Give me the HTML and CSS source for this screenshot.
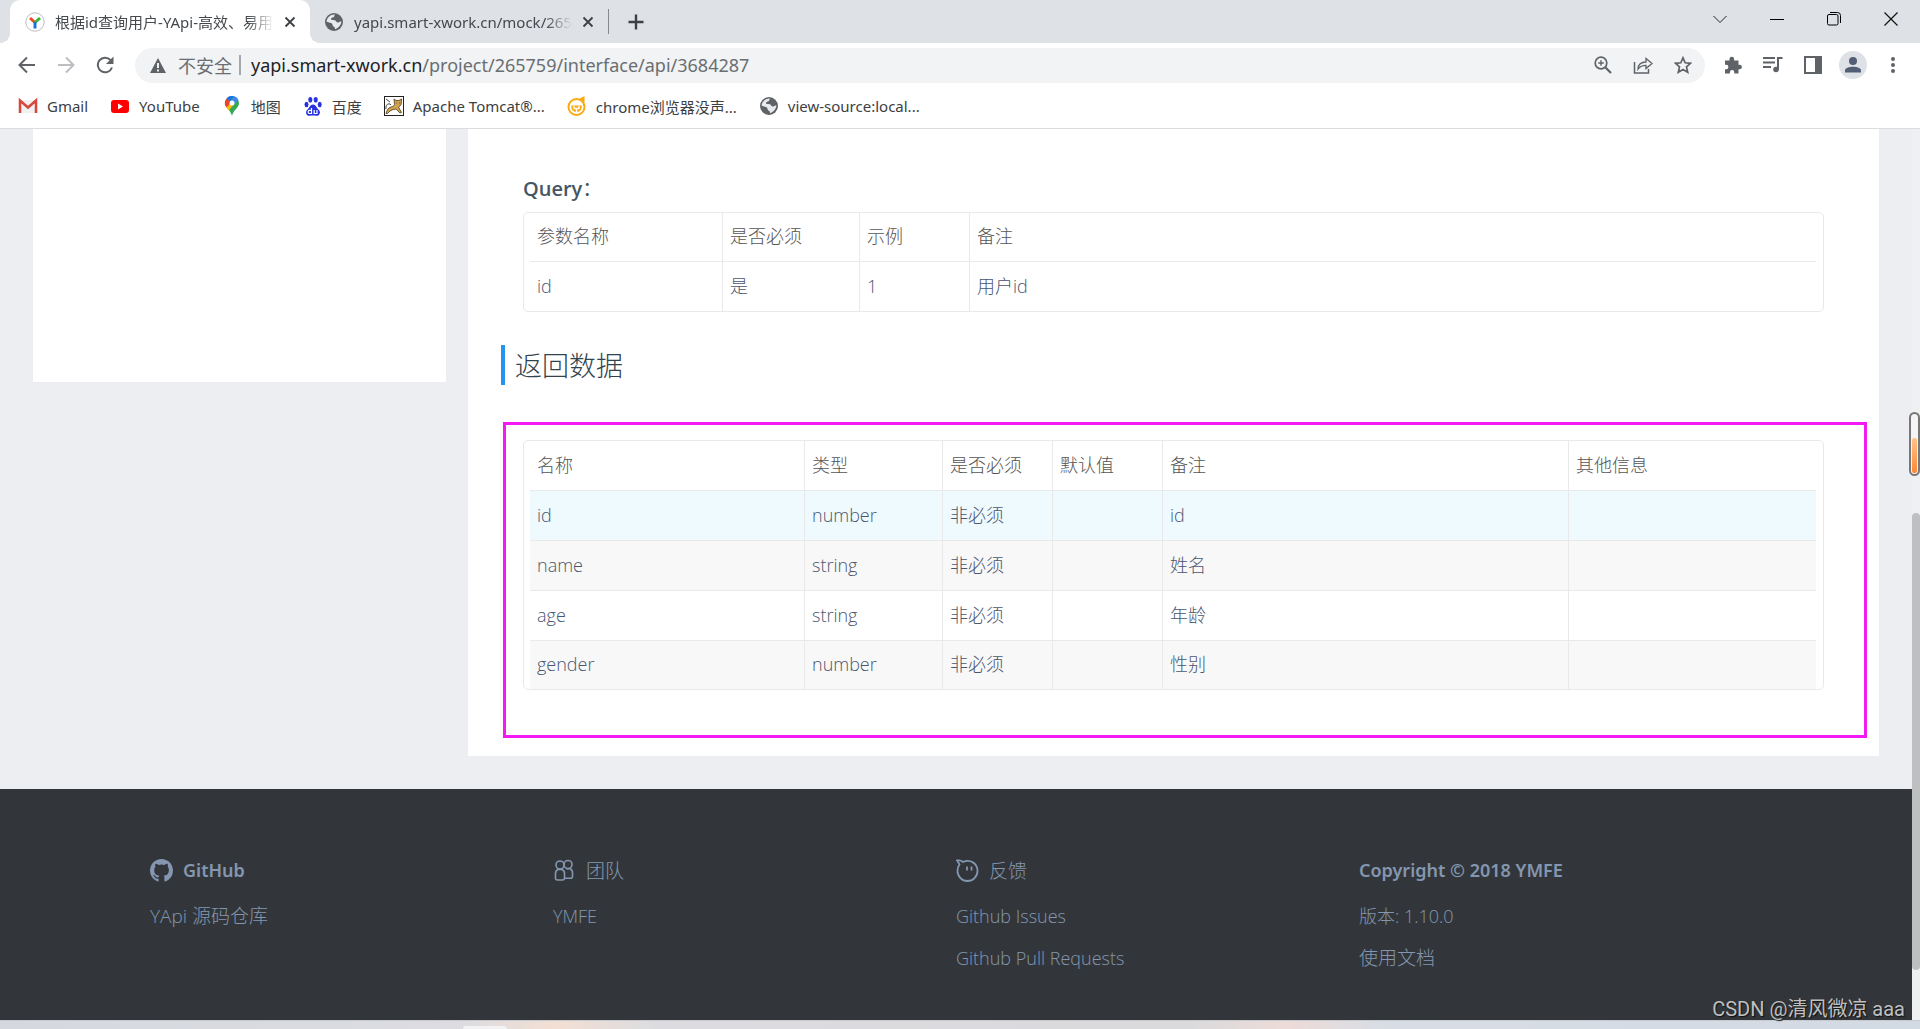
FILE: index.html
```html
<!DOCTYPE html>
<html lang="zh-CN">
<head>
<meta charset="utf-8">
<title>根据id查询用户-YApi</title>
<link rel="stylesheet" href="styles.css">
</head>
<body>
<svg class="defs" aria-hidden="true">
  <symbol id="close" viewBox="0 0 12 12"><path d="M1.5 1.5l9 9M10.5 1.5l-9 9" fill="none" stroke="#3c4043" stroke-width="1.8"/></symbol>
  <symbol id="globe" viewBox="0 0 20 20"><circle cx="10" cy="10" r="9" fill="#5f6368"/><path d="M11 2.5c-1 1-.2 2-1.500 2.700-1.300.6-2.500.5-2.500 1.800 0 1.500 2.500.7 4 1.300 1.500.7 1 2.200 2.800 2.200 1.400 0 1.900-1.500 3.600-.9-.3 3.600-3 6.600-6.400 7.600 0-1.700-.3-2-1.500-2.700-1.200-.6-.5-2.500-2-3.300C6 10.500 4 10.300 2.600 9.800 2.700 5.800 6.500 2.300 11 2.500z" fill="#e8eaed"/></symbol>
</svg>

<header class="browser">
  <div class="tabstrip">
    <div class="tab tab-active">
      <svg class="favicon" viewBox="0 0 20 20"><circle cx="10" cy="10" r="9.200" fill="#fff" stroke="#b8bcc2"/><path d="M10 10.500L5 6" stroke="#ee4b1f" stroke-width="3"/><path d="M10 10.500L15 6" stroke="#33b53a" stroke-width="3"/><path d="M10 10v6.500" stroke="#1b6fe0" stroke-width="3"/></svg>
      <span class="tab-title">根据id查询用户-YApi-高效、易用</span>
      <button class="tab-close" aria-label="关闭"><svg width="12" height="12"><use href="#close"/></svg></button>
    </div>
    <div class="tab tab-back">
      <svg class="favicon"><use href="#globe"/></svg>
      <span class="tab-title">yapi.smart-xwork.cn/mock/2657</span>
      <button class="tab-close" aria-label="关闭"><svg width="12" height="12"><use href="#close"/></svg></button>
    </div>
    <span class="tab-divider"></span>
    <button class="newtab" aria-label="新标签页"><svg width="16" height="16"><path d="M8 .5v15M.5 8h15" stroke="#3c4043" stroke-width="2.400"/></svg></button>
    <div class="window-buttons">
      <button aria-label="搜索标签页"><svg width="14" height="14"><path d="M.5 4L7 10.500 13.500 4" fill="none" stroke="#222"/></svg></button>
      <button aria-label="最小化"><svg width="14" height="14"><path d="M0 7.500h14" stroke="#000"/></svg></button>
      <button aria-label="还原"><svg width="14" height="14"><rect x=".5" y="2.500" width="10.500" height="10.500" rx="1.500" fill="none" stroke="#000"/><path d="M3 .5h7.500q3 0 3 3V11" fill="none" stroke="#000"/></svg></button>
      <button aria-label="关闭窗口"><svg width="14" height="14"><path d="M.5 .5l13 13M13.500 .5l-13 13" stroke="#111" stroke-width="1.200"/></svg></button>
    </div>
  </div>

  <div class="toolbar">
    <div class="nav-buttons">
      <button aria-label="后退"><svg width="18" height="18"><path d="M17 9H2M9 1.500L1.500 9 9 16.500" fill="none" stroke="#5f6368" stroke-width="2"/></svg></button>
      <button aria-label="前进"><svg width="18" height="18"><path d="M1 9h15M9 1.500L16.500 9 9 16.500" fill="none" stroke="#bcbec1" stroke-width="2"/></svg></button>
      <button aria-label="刷新"><svg width="18" height="18"><path d="M16 11.500A7.300 7.300 0 1 1 14.500 4" fill="none" stroke="#5f6368" stroke-width="2"/><path d="M17.500 .5v7.500H10z" fill="#5f6368"/></svg></button>
    </div>
    <div class="omnibox">
      <svg width="16" height="15"><path d="M8 0l8 15H0z" fill="#5f6368"/><path d="M8 5v5M8 11.500v2" stroke="#fff" stroke-width="1.800"/></svg>
      <span class="insecure">不安全</span>
      <span class="omni-divider"></span>
      <span class="url"><b>yapi.smart-xwork.cn</b>/project/265759/interface/api/3684287</span>
      <div class="omni-actions">
        <button aria-label="缩放"><svg width="18" height="18"><circle cx="7" cy="7" r="5.800" fill="none" stroke="#5f6368" stroke-width="1.700"/><path d="M11.500 11.500l5.500 5.500" stroke="#5f6368" stroke-width="2.200"/><path d="M7 4.200v5.600M4.200 7h5.600" stroke="#5f6368" stroke-width="1.400"/></svg></button>
        <button aria-label="分享"><svg width="20" height="18"><path d="M1.500 6v11h14v-4" fill="none" stroke="#5f6368" stroke-width="1.500"/><path d="M5 13c.3-4.500 3-7 8-7V2.500L19 7.500l-6 5V9.300c-3.500 0-6 .9-8 3.700z" fill="none" stroke="#5f6368" stroke-width="1.300"/></svg></button>
        <button aria-label="收藏"><svg width="18" height="18"><path d="M9 1.800l2.200 5 5.300.5-4 3.600 1.200 5.300L9 13.400l-4.700 2.800 1.200-5.300-4-3.600 5.300-.5z" fill="none" stroke="#5f6368" stroke-width="1.700"/></svg></button>
      </div>
    </div>
    <div class="extras">
      <button aria-label="扩展程序"><svg width="18" height="18"><path d="M1 4.500h4.500V3a2.300 2.300 0 0 1 4.600 0v1.500h4.400v4.300h1.200a2.200 2.200 0 0 1 0 4.400h-1.200V17.500H10.300v-1.200a2.200 2.200 0 0 0-4.400 0v1.200H1v-4.300h1.200a2.200 2.200 0 0 0 0-4.400H1z" fill="#5f6368"/></svg></button>
      <button aria-label="媒体控制"><svg width="20" height="18"><path d="M0 2h12M0 6.500h12M0 11h8" stroke="#5f6368" stroke-width="2"/><circle cx="13" cy="13.500" r="2.800" fill="#5f6368"/><path d="M15 13.500V2h4.500" fill="none" stroke="#5f6368" stroke-width="2"/></svg></button>
      <button aria-label="侧边栏"><svg width="18" height="18"><rect x="1" y="1" width="16" height="16" fill="#fff" stroke="#5f6368" stroke-width="2"/><path d="M11 1h6v16h-6z" fill="#5f6368"/></svg></button>
      <button aria-label="个人资料"><svg width="28" height="28"><circle cx="14" cy="14" r="14" fill="#dee1e6"/><circle cx="14" cy="10" r="4" fill="#525e75"/><path d="M6 21.500v-2c0-5 16-5 16 0v2z" fill="#525e75"/></svg></button>
      <button aria-label="菜单"><svg width="6" height="18"><g fill="#5f6368"><circle cx="3" cy="3" r="2"/><circle cx="3" cy="9" r="2"/><circle cx="3" cy="15" r="2"/></g></svg></button>
    </div>
  </div>

  <nav class="bookmarks">
    <a href="#"><svg viewBox="0 0 20 20"><path d="M1 4h18v13H1z" fill="#f1f1f1"/><path d="M2 17V4.500l8 7 8-7V17" fill="none" stroke="#d9453a" stroke-width="2.500"/></svg>Gmail</a>
    <a href="#"><svg viewBox="0 0 20 20"><rect x="1" y="4" width="18" height="13" rx="3" fill="#f00"/><path d="M8 7.500l5 3-5 3z" fill="#fff"/></svg>YouTube</a>
    <a href="#"><svg viewBox="0 0 20 20"><path d="M10 0a7 7 0 0 0-7 7c0 5 5.500 6.500 7 13 1.500-6.500 7-8 7-13a7 7 0 0 0-7-7z" fill="#34a853"/><path d="M4.500 11.500A7 7 0 0 1 4.500 2.700L10 7z" fill="#ea4335"/><path d="M4.500 2.700A7 7 0 0 1 12 .3L8 5z" fill="#1a73e8"/><path d="M12 .3a7 7 0 0 1 4.300 3.600L10 11 7.500 8z" fill="#4285f4"/><path d="M4.500 11.500L9 6.500l2.500 2.500-4.800 5.500z" fill="#fbbc04"/><circle cx="10" cy="7" r="2.500" fill="#fff"/></svg>地图</a>
    <a href="#"><svg viewBox="0 0 20 20"><g fill="#2932e1"><ellipse cx="3.500" cy="8.500" rx="2" ry="2.700"/><ellipse cx="7.300" cy="3.800" rx="2" ry="2.800"/><ellipse cx="12.700" cy="3.800" rx="2" ry="2.800"/><ellipse cx="16.700" cy="8.500" rx="2" ry="2.700"/><path d="M10 8.500c3 0 3.500 3.500 6 5.500 2.500 3-.3 6.300-3 5.800-2-.5-4-.5-6 0-2.700.5-5.500-2.800-3-5.800 2.500-2 3-5.500 6-5.500z"/></g><path d="M8.500 12v5.500H6.700a1.500 1.500 0 0 1 0-3.200h1.800M11.200 14v3.500H14V14" fill="none" stroke="#fff" stroke-width="1.200"/></svg>百度</a>
    <a href="#"><svg viewBox="0 0 20 20"><rect x=".5" y=".5" width="19" height="19" fill="#fff" stroke="#222"/><path d="M2 17.500c1-3 1.500-5.500 5-6.500 2-.5 3-1 3.500-2.500L10 3l2 1.500h3L17.500 3l-.3 5c-.7 2-1.500 2-2.700 3l3 5.500-1.500.5-4-4-3 .5-3 1.500-2.500 2.500z" fill="#d2a24c" stroke="#4a3c20" stroke-width=".8"/><path d="M2 13c-1-4 3-7 5-4M2 3l4 3M12 7h.8M15 7h.8" fill="none" stroke="#444"/></svg>Apache Tomcat®...</a>
    <a href="#"><svg viewBox="0 0 20 20"><circle cx="9.500" cy="11" r="8" fill="#fff" stroke="#fca910" stroke-width="2"/><path d="M11 3.500l6.500-3.500v7z" fill="#fca910"/><path d="M4.500 9.500h10c1 3-1 6.500-5 6.500s-6-3.500-5-6.500z" fill="#fca910"/><path d="M7 10v2.500h5V10M9.500 13v3" fill="none" stroke="#fff" stroke-width="1.300"/></svg>chrome浏览器没声...</a>
    <a href="#"><svg><use href="#globe"/></svg>view-source:local...</a>
  </nav>
</header>

<div class="viewport">
  <div class="page">
    <div class="workspace">
      <aside class="sidebar"></aside>
      <main class="content">
        <h3 class="query-title">Query<span>：</span></h3>
        <div class="table-frame">
          <table class="query-table">
            <colgroup><col class="w-name"><col class="w-need"><col class="w-demo"><col></colgroup>
            <thead><tr><th>参数名称</th><th>是否必须</th><th>示例</th><th>备注</th></tr></thead>
            <tbody><tr><td>id</td><td>是</td><td>1</td><td>用户id</td></tr></tbody>
          </table>
        </div>
        <h2 class="section-title">返回数据</h2>
        <div class="highlight">
          <div class="table-frame">
            <table class="result-table">
              <colgroup><col class="w-field"><col class="w-type"><col class="w-must"><col class="w-default"><col class="w-note"><col></colgroup>
              <thead><tr><th>名称</th><th>类型</th><th>是否必须</th><th>默认值</th><th>备注</th><th>其他信息</th></tr></thead>
              <tbody>
                <tr class="hovered"><td>id</td><td>number</td><td>非必须</td><td></td><td>id</td><td></td></tr>
                <tr class="striped"><td>name</td><td>string</td><td>非必须</td><td></td><td>姓名</td><td></td></tr>
                <tr><td>age</td><td>string</td><td>非必须</td><td></td><td>年龄</td><td></td></tr>
                <tr class="striped"><td>gender</td><td>number</td><td>非必须</td><td></td><td>性别</td><td></td></tr>
              </tbody>
            </table>
          </div>
        </div>
      </main>
    </div>
    <footer class="footer">
      <section>
        <h4><svg width="23" height="23" viewBox="0 0 16 16"><path fill="#8496b0" d="M8 0C3.580 0 0 3.580 0 8c0 3.540 2.290 6.530 5.470 7.590.4.070.55-.17.55-.38v-1.490c-2.010.37-2.530-.49-2.690-.94-.09-.23-.48-.94-.82-1.130-.28-.15-.68-.52-.01-.53.63-.01 1.080.58 1.230.82.72 1.210 1.870.87 2.330.66.07-.52.28-.87.51-1.070-1.780-.2-3.640-.89-3.640-3.950 0-.87.31-1.590.82-2.150-.08-.2-.36-1.020.08-2.120 0 0 .67-.21 2.200.82a7.600 7.600 0 0 1 4 0c1.530-1.040 2.200-.82 2.200-.82.44 1.100.16 1.920.08 2.120.51.56.82 1.270.82 2.150 0 3.070-1.870 3.750-3.650 3.950.29.25.54.73.54 1.480v2.200c0 .21.15.46.55.38A8 8 0 0 0 16 8c0-4.420-3.580-8-8-8z"/></svg>GitHub</h4>
        <a href="#" class="cn">YApi 源码仓库</a>
      </section>
      <section>
        <h4 class="cn"><svg width="23" height="23"><g fill="none" stroke="#8496b0" stroke-width="1.600"><circle cx="7" cy="6" r="4"/><circle cx="15" cy="5.500" r="4"/><path d="M5 10.500h4q2.500 1 2.500 4V19q0 2-2 2h-5q-2 0-2-2v-4.500q0-3 2.500-4zM13 9.800h4q2.500 1 2.500 4v3.500q0 2-2 2h-5.500"/></g></svg>团队</h4>
        <a href="#">YMFE</a>
      </section>
      <section>
        <h4 class="cn"><svg width="23" height="23"><path d="M1 1.500c3-.5 4.500 0 6 1.500 7-3 14.500 1 14.500 9A10 10 0 0 1 1.500 12c0-3 .8-5 2-6.500C2.700 4 2 2.800 1 1.500z" fill="none" stroke="#8496b0" stroke-width="1.800"/><path d="M11 7.500v4M15.500 7.500v4" stroke="#8496b0" stroke-width="1.800"/></svg>反馈</h4>
        <a href="#">Github Issues</a>
        <a href="#">Github Pull Requests</a>
      </section>
      <section>
        <h4>Copyright © 2018 YMFE</h4>
        <a href="#">版本: 1.10.0</a>
        <a href="#" class="cn">使用文档</a>
      </section>
    </footer>
    <p class="watermark">CSDN @清风微凉 aaa</p>
  </div>
  <div class="scrollbar"><div class="thumb"></div></div>
  <div class="gauge"><div class="gauge-fill"></div></div>
</div>
<div class="taskbar"><span></span></div>
</body>
</html>
```
FILE: styles.css
```css
* { box-sizing: border-box; }

body {
  margin: 0;
  min-height: 100vh;
  display: flex;
  flex-direction: column;
  font-family: "Open Sans", "Noto Sans CJK SC", sans-serif;
  font-size: 18px;
  font-weight: 300;
  color: #4a566f;
  background: #eceef1;
}

h2, h3, h4, p { margin: 0; }
a { color: inherit; text-decoration: none; }
button { display: flex; padding: 0; border: 0; background: none; }
svg { display: block; flex: none; }
.defs { position: absolute; width: 0; height: 0; }

.browser {
  border-bottom: 1px solid #dadce0;
  background: #fff;
  font-family: "Noto Sans", "Noto Sans CJK SC", sans-serif;
  font-weight: 400;
}

.tabstrip {
  display: flex;
  align-items: center;
  height: 43px;
  padding-left: 10px;
  background: #dee1e6;
}
.tab {
  display: flex;
  align-items: center;
  gap: 10px;
  width: 300px;
  height: 43px;
  padding: 0 14px 0 15px;
  font-size: 15px;
  color: #45494d;
}
.tab-active {
  position: relative;
  border-radius: 10px 10px 0 0;
  background: #fff;
}
/* curved feet that join the active tab to the toolbar */
.tab-active::before, .tab-active::after {
  content: "";
  position: absolute;
  bottom: 0;
  width: 10px;
  height: 10px;
}
.tab-active::before { right: 100%; background: radial-gradient(circle at 0 0, #dee1e6 10px, #fff 10px); }
.tab-active::after { left: 100%; background: radial-gradient(circle at 100% 0, #dee1e6 10px, #fff 10px); }
.tab-back { width: 298px; padding-left: 14px; }
.favicon { width: 20px; height: 20px; }
.tab-title {
  flex: 1;
  overflow: hidden;
  white-space: nowrap;
  -webkit-mask-image: linear-gradient(90deg, #000 88%, transparent);
  mask-image: linear-gradient(90deg, #000 88%, transparent);
}
.tab-divider { width: 1px; height: 25px; background: #85888c; }
.newtab { margin-left: 19px; }
.window-buttons {
  display: flex;
  gap: 43px;
  margin-left: auto;
  padding: 0 22px 6px 0;
}

.toolbar {
  display: flex;
  align-items: center;
  gap: 14px;
  height: 44px;
  padding: 0 13px 0 18px;
}
.nav-buttons { display: flex; gap: 21px; padding-right: 7px; }
.omnibox {
  flex: 1;
  display: flex;
  align-items: center;
  height: 35px;
  padding: 0 13px 0 15px;
  border-radius: 18px;
  background: #f1f3f4;
  font-size: 18px;
  white-space: nowrap;
  color: #6a6e72;
}
.insecure { margin-left: 12px; }
.omni-divider { width: 2px; height: 20px; margin: 0 10px 0 7px; background: #a5a8ab; }
.url b { font-weight: 400; color: #202124; }
.omni-actions { display: flex; gap: 21px; margin-left: auto; }
.extras { display: flex; align-items: center; gap: 12px; }
.extras button { width: 28px; justify-content: center; }

.bookmarks {
  display: flex;
  align-items: center;
  gap: 22px;
  height: 41px;
  padding: 0 18px 3px;
  font-size: 15px;
  color: #3c4043;
}
.bookmarks a { display: flex; align-items: center; gap: 9px; }
.bookmarks svg { width: 20px; height: 20px; }

.viewport {
  position: relative;
  flex: 1;
  display: flex;
}
.page { position: relative; flex: 1; display: flex; flex-direction: column; }
.workspace {
  display: flex;
  align-items: flex-start;
  gap: 22px;
  padding: 0 33px;
}
.sidebar { width: 413px; height: 253px; background: #fff; }
.content {
  flex: 1;
  padding: 44px 12px 18px 33px;
  background: #fff;
}
.query-title {
  padding-left: 22px;
  font-size: 20px;
  line-height: 32px;
  font-weight: 600;
  color: #455763;
}
.query-title span { font-weight: 400; }
.query-title + .table-frame { margin: 7px 43px 0 22px; }

.table-frame {
  padding: 0 7px 0 6px;
  border: 1px solid #e9e9e9;
  border-radius: 5px;
}
table {
  width: 100%;
  table-layout: fixed;
  border-collapse: separate;
  border-spacing: 0;
}
th, td {
  height: 50px;
  padding: 0 7px 2px;
  border-right: 1px solid #e9e9e9;
  border-bottom: 1px solid #e9e9e9;
  line-height: 24px;
  text-align: left;
  font-weight: 300;
}
.query-table th, .query-table td { height: 49px; }
th { color: #555; }
th:last-child, td:last-child { border-right: 0; }
tbody tr:last-child td { border-bottom: 0; }
.result-table tr:last-child td { height: 48px; }
.result-table thead tr th { height: 50px; }
.hovered { background: #effaff; }
.striped { background: #f8f8f8; }
.w-name { width: 193px; }
.w-need { width: 137px; }
.w-demo { width: 110px; }
.w-field { width: 275px; }
.w-type { width: 138px; }
.w-must { width: 110px; }
.w-default { width: 110px; }
.w-note { width: 406px; }

.section-title {
  margin: 33px 0 37px;
  padding: 2px 0 0 10px;
  border-left: 4px solid #2395f1;
  font-size: 27px;
  line-height: 38px;
  font-weight: 300;
  color: #33434e;
}
.highlight {
  margin-left: 2px;
  padding: 15px 40px 45px 17px;
  border: 3px solid #f31bf3;
}

.footer {
  flex: 1;
  display: grid;
  grid-template-columns: repeat(4, 1fr);
  margin-top: 33px;
  padding: 60px 150px 0;
  background: #32363a;
  font-size: 18px;
  color: #8496b0;
}
.footer h4 {
  display: flex;
  align-items: center;
  gap: 10px;
  height: 42px;
  margin-bottom: 4px;
  font-family: "Noto Sans", "Noto Sans CJK SC", sans-serif;
  font-size: 18px;
  font-weight: 600;
}
.footer a { display: block; line-height: 42px; }
.footer .cn { font-size: 19px; font-weight: 300; }
.watermark {
  position: absolute;
  right: 7px;
  bottom: 0;
  font-family: Roboto, "Noto Sans CJK SC", sans-serif;
  font-size: 20px;
  line-height: 22px;
  font-weight: 400;
  color: #bfc0c1;
  text-shadow: 1px 1px 1px #111;
}

.scrollbar { width: 8px; padding-top: 384px; background: #eef0f2; }
.thumb { height: 457px; border-radius: 4px; background: #bdbfc1; }
.gauge {
  position: absolute;
  top: 283px;
  right: 0;
  display: flex;
  align-items: flex-end;
  width: 11px;
  height: 64px;
  padding: 1px;
  border: 2px solid #777;
  border-radius: 6px;
  background: #f5f5f5;
}
.gauge-fill { width: 100%; height: 35px; border-radius: 2px; background: linear-gradient(#ffc58a, #ff8534); }

.taskbar {
  height: 9px;
  border-top: 1px solid #c8c9cc;
  background: linear-gradient(90deg, #d5d9df, #dcdce1 24%, #f3dfd3 29%, #dcdce0 34%, #dadadd 62%, #eddbd7 67%, #d8dde5 72%, #d2dae4);
}
.taskbar span { display: block; width: 44px; height: 3px; margin: 5px 0 0 463px; border-radius: 4px 4px 0 0; background: #f3f3f5; }
```
